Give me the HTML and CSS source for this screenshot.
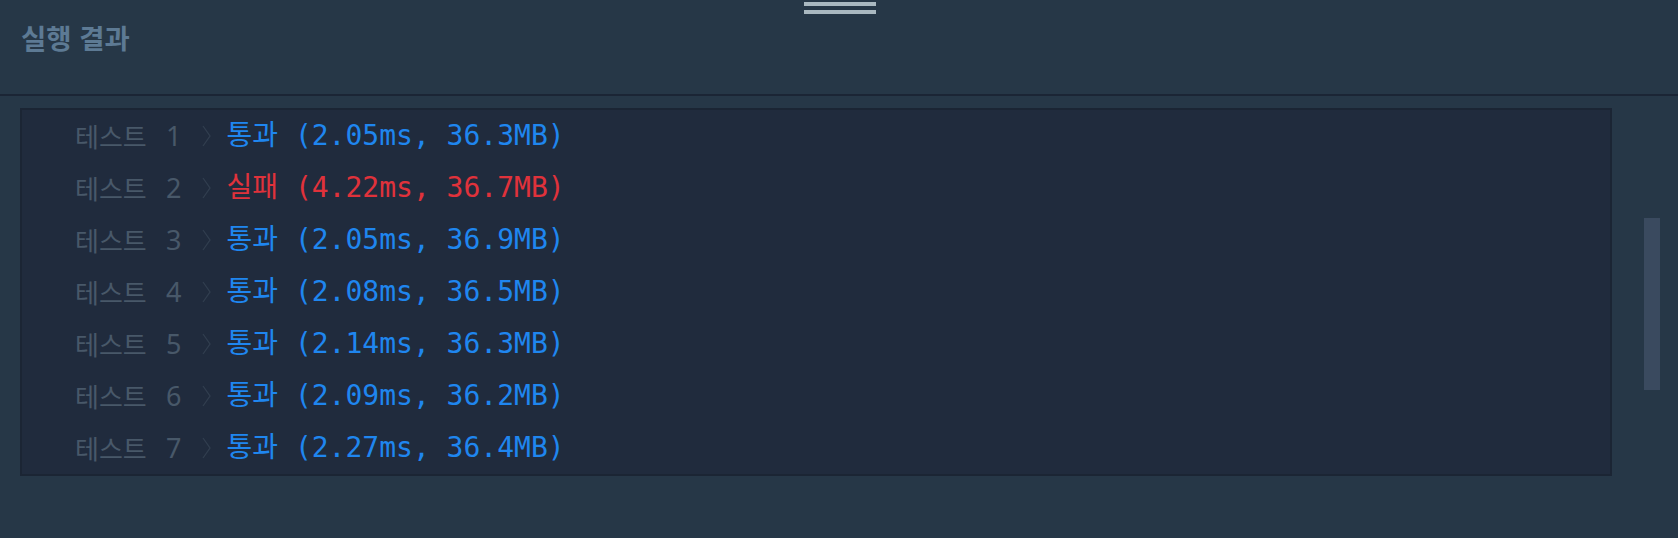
FILE: index.html
```html
<!DOCTYPE html>
<html lang="ko">
<head>
<meta charset="utf-8">
<title>실행 결과</title>
<link rel="stylesheet" href="styles.css">
</head>
<body>
<div class="panel">
  <div class="handle"><span class="bar"></span><span class="bar"></span></div>
  <header class="head">
    <h2 class="title">실행 결과</h2>
  </header>
  <div class="content">
    <div class="console">
      <div class="row"><span class="label">테스트 <span class="num">1</span></span><svg class="chev" width="9" height="22" viewBox="0 0 9 22"><path d="M1 1 L8 11 L1 21" fill="none" stroke="#313e4f" stroke-width="1.3"/></svg><span class="res pass">통과 (2.05ms, 36.3MB)</span></div>
      <div class="row"><span class="label">테스트 <span class="num">2</span></span><svg class="chev" width="9" height="22" viewBox="0 0 9 22"><path d="M1 1 L8 11 L1 21" fill="none" stroke="#313e4f" stroke-width="1.3"/></svg><span class="res fail">실패 (4.22ms, 36.7MB)</span></div>
      <div class="row"><span class="label">테스트 <span class="num">3</span></span><svg class="chev" width="9" height="22" viewBox="0 0 9 22"><path d="M1 1 L8 11 L1 21" fill="none" stroke="#313e4f" stroke-width="1.3"/></svg><span class="res pass">통과 (2.05ms, 36.9MB)</span></div>
      <div class="row"><span class="label">테스트 <span class="num">4</span></span><svg class="chev" width="9" height="22" viewBox="0 0 9 22"><path d="M1 1 L8 11 L1 21" fill="none" stroke="#313e4f" stroke-width="1.3"/></svg><span class="res pass">통과 (2.08ms, 36.5MB)</span></div>
      <div class="row"><span class="label">테스트 <span class="num">5</span></span><svg class="chev" width="9" height="22" viewBox="0 0 9 22"><path d="M1 1 L8 11 L1 21" fill="none" stroke="#313e4f" stroke-width="1.3"/></svg><span class="res pass">통과 (2.14ms, 36.3MB)</span></div>
      <div class="row"><span class="label">테스트 <span class="num">6</span></span><svg class="chev" width="9" height="22" viewBox="0 0 9 22"><path d="M1 1 L8 11 L1 21" fill="none" stroke="#313e4f" stroke-width="1.3"/></svg><span class="res pass">통과 (2.09ms, 36.2MB)</span></div>
      <div class="row"><span class="label">테스트 <span class="num">7</span></span><svg class="chev" width="9" height="22" viewBox="0 0 9 22"><path d="M1 1 L8 11 L1 21" fill="none" stroke="#313e4f" stroke-width="1.3"/></svg><span class="res pass">통과 (2.27ms, 36.4MB)</span></div>
    </div>
    <div class="track"><div class="thumb"></div></div>
  </div>
</div>
</body>
</html>
```
FILE: styles.css
```css
html, body {
  margin: 0;
  padding: 0;
  background: #263747;
  height: 100%;
  overflow: hidden;
}
.panel {
  position: relative;
  height: 100%;
}
.handle {
  position: absolute;
  top: 2px;
  left: 804px;
  width: 72px;
  display: flex;
  flex-direction: column;
  gap: 4px;
}
.bar {
  display: block;
  height: 4px;
  background: #a9b8c0;
}
.head {
  height: 94px;
  border-bottom: 2px solid #1b2535;
  box-sizing: content-box;
}
.title {
  margin: 0;
  padding: 19px 0 0 21px;
  font-family: "Noto Sans CJK KR", "Noto Sans", sans-serif;
  font-weight: 700;
  font-size: 27.5px;
  line-height: 36px;
  color: #5d7a94;
}
.content {
  display: flex;
  padding: 12px 0 0 20px;
}
.console {
  width: 1588px;
  border: 2px solid #1b2534;
  background: #202b3d;
}
.row {
  height: 52px;
  display: flex;
  align-items: center;
  padding-left: 53px;
}
.label {
  font-family: "Noto Sans CJK KR", "Noto Sans", sans-serif;
  font-size: 26px;
  line-height: 52px;
  color: #485869;
}
.num {
  font-family: "Noto Sans", "Open Sans", sans-serif;
  font-size: 27px;
  margin-left: 12px;
  vertical-align: 1px;
}
.chev {
  margin-left: 20px;
  flex: none;
}
.res {
  margin-left: 16px;
  font-family: "DejaVu Sans Mono", "Noto Sans CJK KR", monospace;
  font-size: 28px;
  line-height: 52px;
  white-space: pre;
}
.pass { color: #1f86ef; }
.fail { color: #e0323b; }
.track {
  margin-left: 32px;
  padding-top: 110px;
}
.thumb {
  width: 16px;
  height: 172px;
  background: #3a4a5f;
}
```
